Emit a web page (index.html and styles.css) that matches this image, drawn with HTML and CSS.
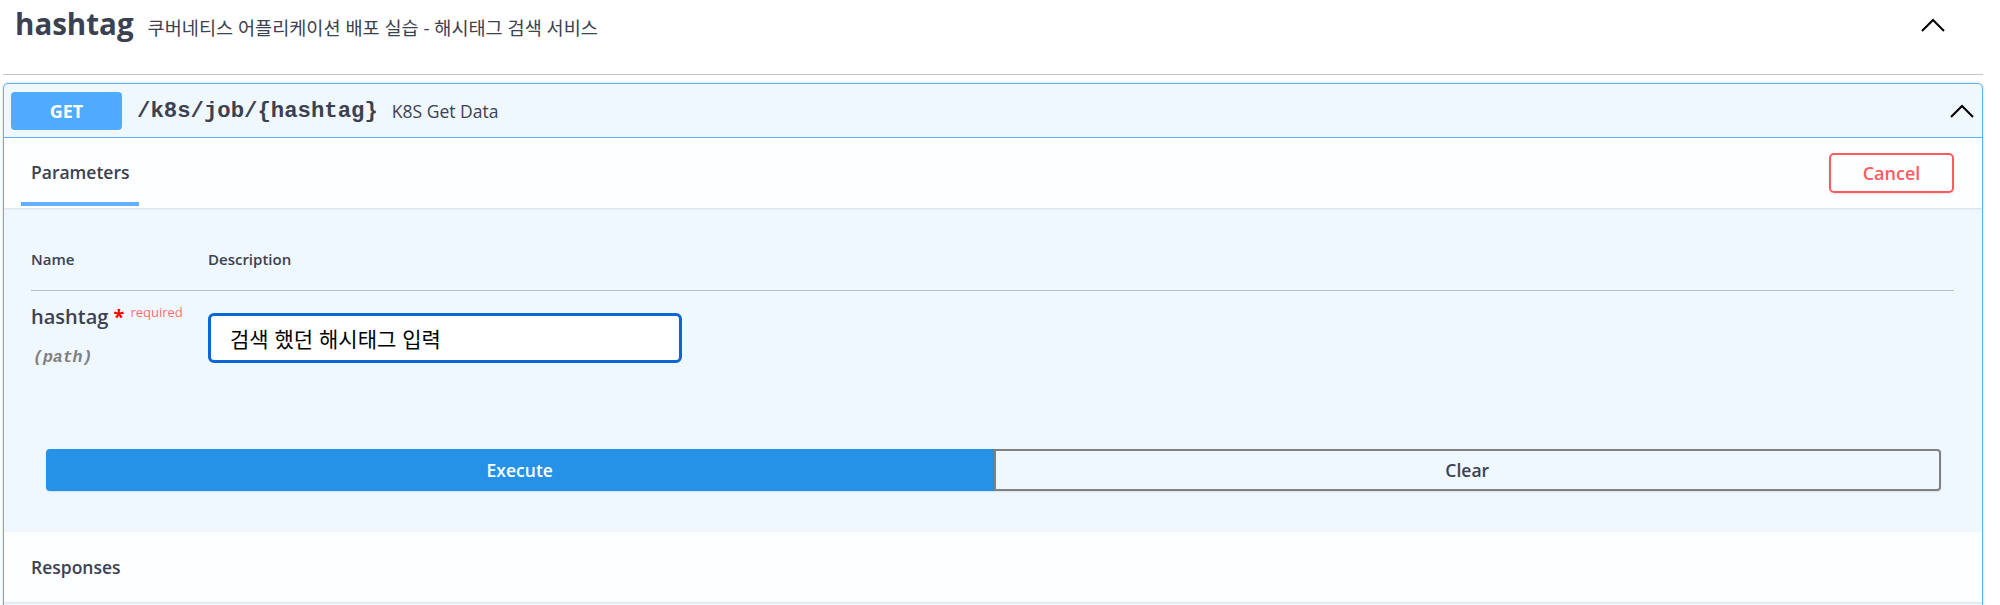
FILE: index.html
```html
<!DOCTYPE html>
<html lang="ko">
<head>
<meta charset="utf-8">
<title>hashtag</title>
<link rel="stylesheet" href="styles.css">
</head>
<body>
<div class="page">
  <div class="tag">
    <span class="tag-title">hashtag</span>
    <small class="tag-desc">쿠버네티스 어플리케이션 배포 실습 - 해시태그 검색 서비스</small>
    <svg class="tag-chev" width="24" height="14" viewBox="0 0 24 14"><polyline points="1,13 12,2 23,13" fill="none" stroke="#000" stroke-width="2"/></svg>
  </div>
  <div class="opblock">
    <div class="summary">
      <span class="method">GET</span>
      <span class="path">/k8s/job/{hashtag}</span>
      <span class="summary-desc">K8S Get Data</span>
      <svg class="summary-chev" width="24" height="14" viewBox="0 0 24 14"><polyline points="1,13 12,2 23,13" fill="none" stroke="#000" stroke-width="2"/></svg>
    </div>
    <div class="section-header">
      <h4 class="tab"><span class="tab-label">Parameters</span></h4>
      <button class="cancel">Cancel</button>
    </div>
    <div class="params">
      <table class="ptable">
        <thead>
          <tr><th class="col-name">Name</th><th>Description</th></tr>
        </thead>
        <tbody>
          <tr>
            <td class="col-name">
              <div class="pname">hashtag<span class="star">&nbsp;*</span><span class="req">required</span></div>
              <div class="pin">(path)</div>
            </td>
            <td><input class="pinput" type="text" value="검색 했던 해시태그 입력"></td>
          </tr>
        </tbody>
      </table>
    </div>
    <div class="execute-wrapper">
      <button class="btn execute">Execute</button>
      <button class="btn clear">Clear</button>
    </div>
    <div class="section-header responses">
      <h4 class="resp-title">Responses</h4>
    </div>
    <div class="rest"></div>
  </div>
</div>
</body>
</html>
```

FILE: styles.css
```css
html, body {
  margin: 0;
  padding: 0;
  overflow: hidden;
  background: #fff;
}
body {
  font-family: "Open Sans", "Noto Sans CJK KR", sans-serif;
  color: #3b4151;
}
.page {
  width: 1980px;
  padding-left: 3px;
}
.tag {
  box-sizing: border-box;
  height: 75px;
  display: flex;
  align-items: baseline;
  padding: 3px 38px 0 12px;
  border-bottom: 1px solid #c4c6cb;
}
.tag-title {
  font-size: 29.5px;
  font-weight: 700;
  line-height: 41px;
}
.tag-desc {
  font-size: 18.6px;
  margin-left: 14px;
}
.tag-chev {
  align-self: flex-start;
  margin-left: auto;
  margin-top: 15px;
}
.opblock {
  margin-top: 8px;
  border: 1px solid #61affe;
  border-radius: 5px;
  background: #eff7ff;
  box-shadow: 0 0 3px rgba(0, 0, 0, 0.19);
}
.summary {
  display: flex;
  align-items: center;
  padding: 8px 8px 7px 7px;
  border-bottom: 1px solid #61affe;
}
.method {
  width: 111px;
  height: 38px;
  line-height: 38px;
  text-align: center;
  background: #4fabfd;
  color: #fff;
  border-radius: 4px;
  font-size: 18px;
  font-weight: 700;
}
.path {
  font-family: "Liberation Mono", monospace;
  font-weight: 700;
  font-size: 22.3px;
  margin-left: 15px;
}
.summary-desc {
  font-size: 17.5px;
  margin-left: 14px;
}
.summary-chev {
  margin-left: auto;
}
.section-header {
  box-sizing: border-box;
  height: 70px;
  display: flex;
  align-items: center;
  padding: 0 28px 0 27px;
  background: rgba(255, 255, 255, 0.8);
  box-shadow: 0 1px 2px rgba(0, 0, 0, 0.1);
}
.tab {
  margin: -3px 0 0;
  font-size: 17.5px;
  font-weight: 600;
}
.tab-label {
  position: relative;
}
.tab-label::after {
  content: "";
  position: absolute;
  left: 50%;
  bottom: -22px;
  width: 120%;
  height: 4px;
  transform: translateX(-50%);
  background: #61affe;
}
.cancel {
  margin-left: auto;
  box-sizing: border-box;
  width: 125px;
  height: 40px;
  border: 2px solid #ff5a5f;
  border-radius: 5px;
  background: transparent;
  color: #ff5a5f;
  font-family: inherit;
  font-size: 18px;
  font-weight: 600;
  box-shadow: 0 1px 2px rgba(0, 0, 0, 0.1);
}
.params {
  padding: 25px 28px 0 27px;
}
.ptable {
  width: 100%;
  border-collapse: collapse;
}
.ptable th {
  text-align: left;
  font-size: 15px;
  font-weight: 600;
  padding: 16px 0 21px;
  border-bottom: 1px solid #b8bfc8;
}
.ptable .col-name {
  width: 177px;
}
.ptable td {
  vertical-align: top;
  padding: 12px 0 0;
}
.pname {
  font-size: 20px;
  font-weight: 600;
}
.star {
  color: #f00;
  font-weight: 700;
}
.req {
  position: relative;
  top: -7.5px;
  padding: 6px;
  font-size: 13px;
  font-weight: 400;
  color: rgba(255, 0, 0, 0.6);
}
.pin {
  margin-top: 18px;
  padding-left: 2px;
  font-family: "Liberation Mono", monospace;
  font-size: 16.5px;
  font-weight: 700;
  font-style: italic;
  color: #808080;
}
.pinput {
  margin-top: 10px;
  box-sizing: border-box;
  width: 474px;
  height: 50px;
  border: 3px solid #0c66d6;
  border-radius: 6px;
  padding: 0 0 0 19px;
  background: #fff;
  font-family: "Noto Sans CJK KR", sans-serif;
  font-size: 21px;
  color: #000;
  outline: none;
}
.execute-wrapper {
  display: flex;
  padding: 82px 41px 41px 42px;
}
.btn {
  flex: 1;
  box-sizing: border-box;
  height: 42px;
  font-family: inherit;
  font-size: 17.5px;
  font-weight: 600;
  box-shadow: 0 1px 2px rgba(0, 0, 0, 0.1);
}
.execute {
  background: #2592e7;
  border: 2px solid #2592e7;
  color: #fff;
  border-radius: 4px 0 0 4px;
}
.clear {
  background: transparent;
  border: 2px solid #808080;
  color: #3b4151;
  border-radius: 0 4px 4px 0;
}
.resp-title {
  margin: 0;
  font-size: 17.5px;
  font-weight: 600;
}
.rest {
  height: 120px;
}
```
